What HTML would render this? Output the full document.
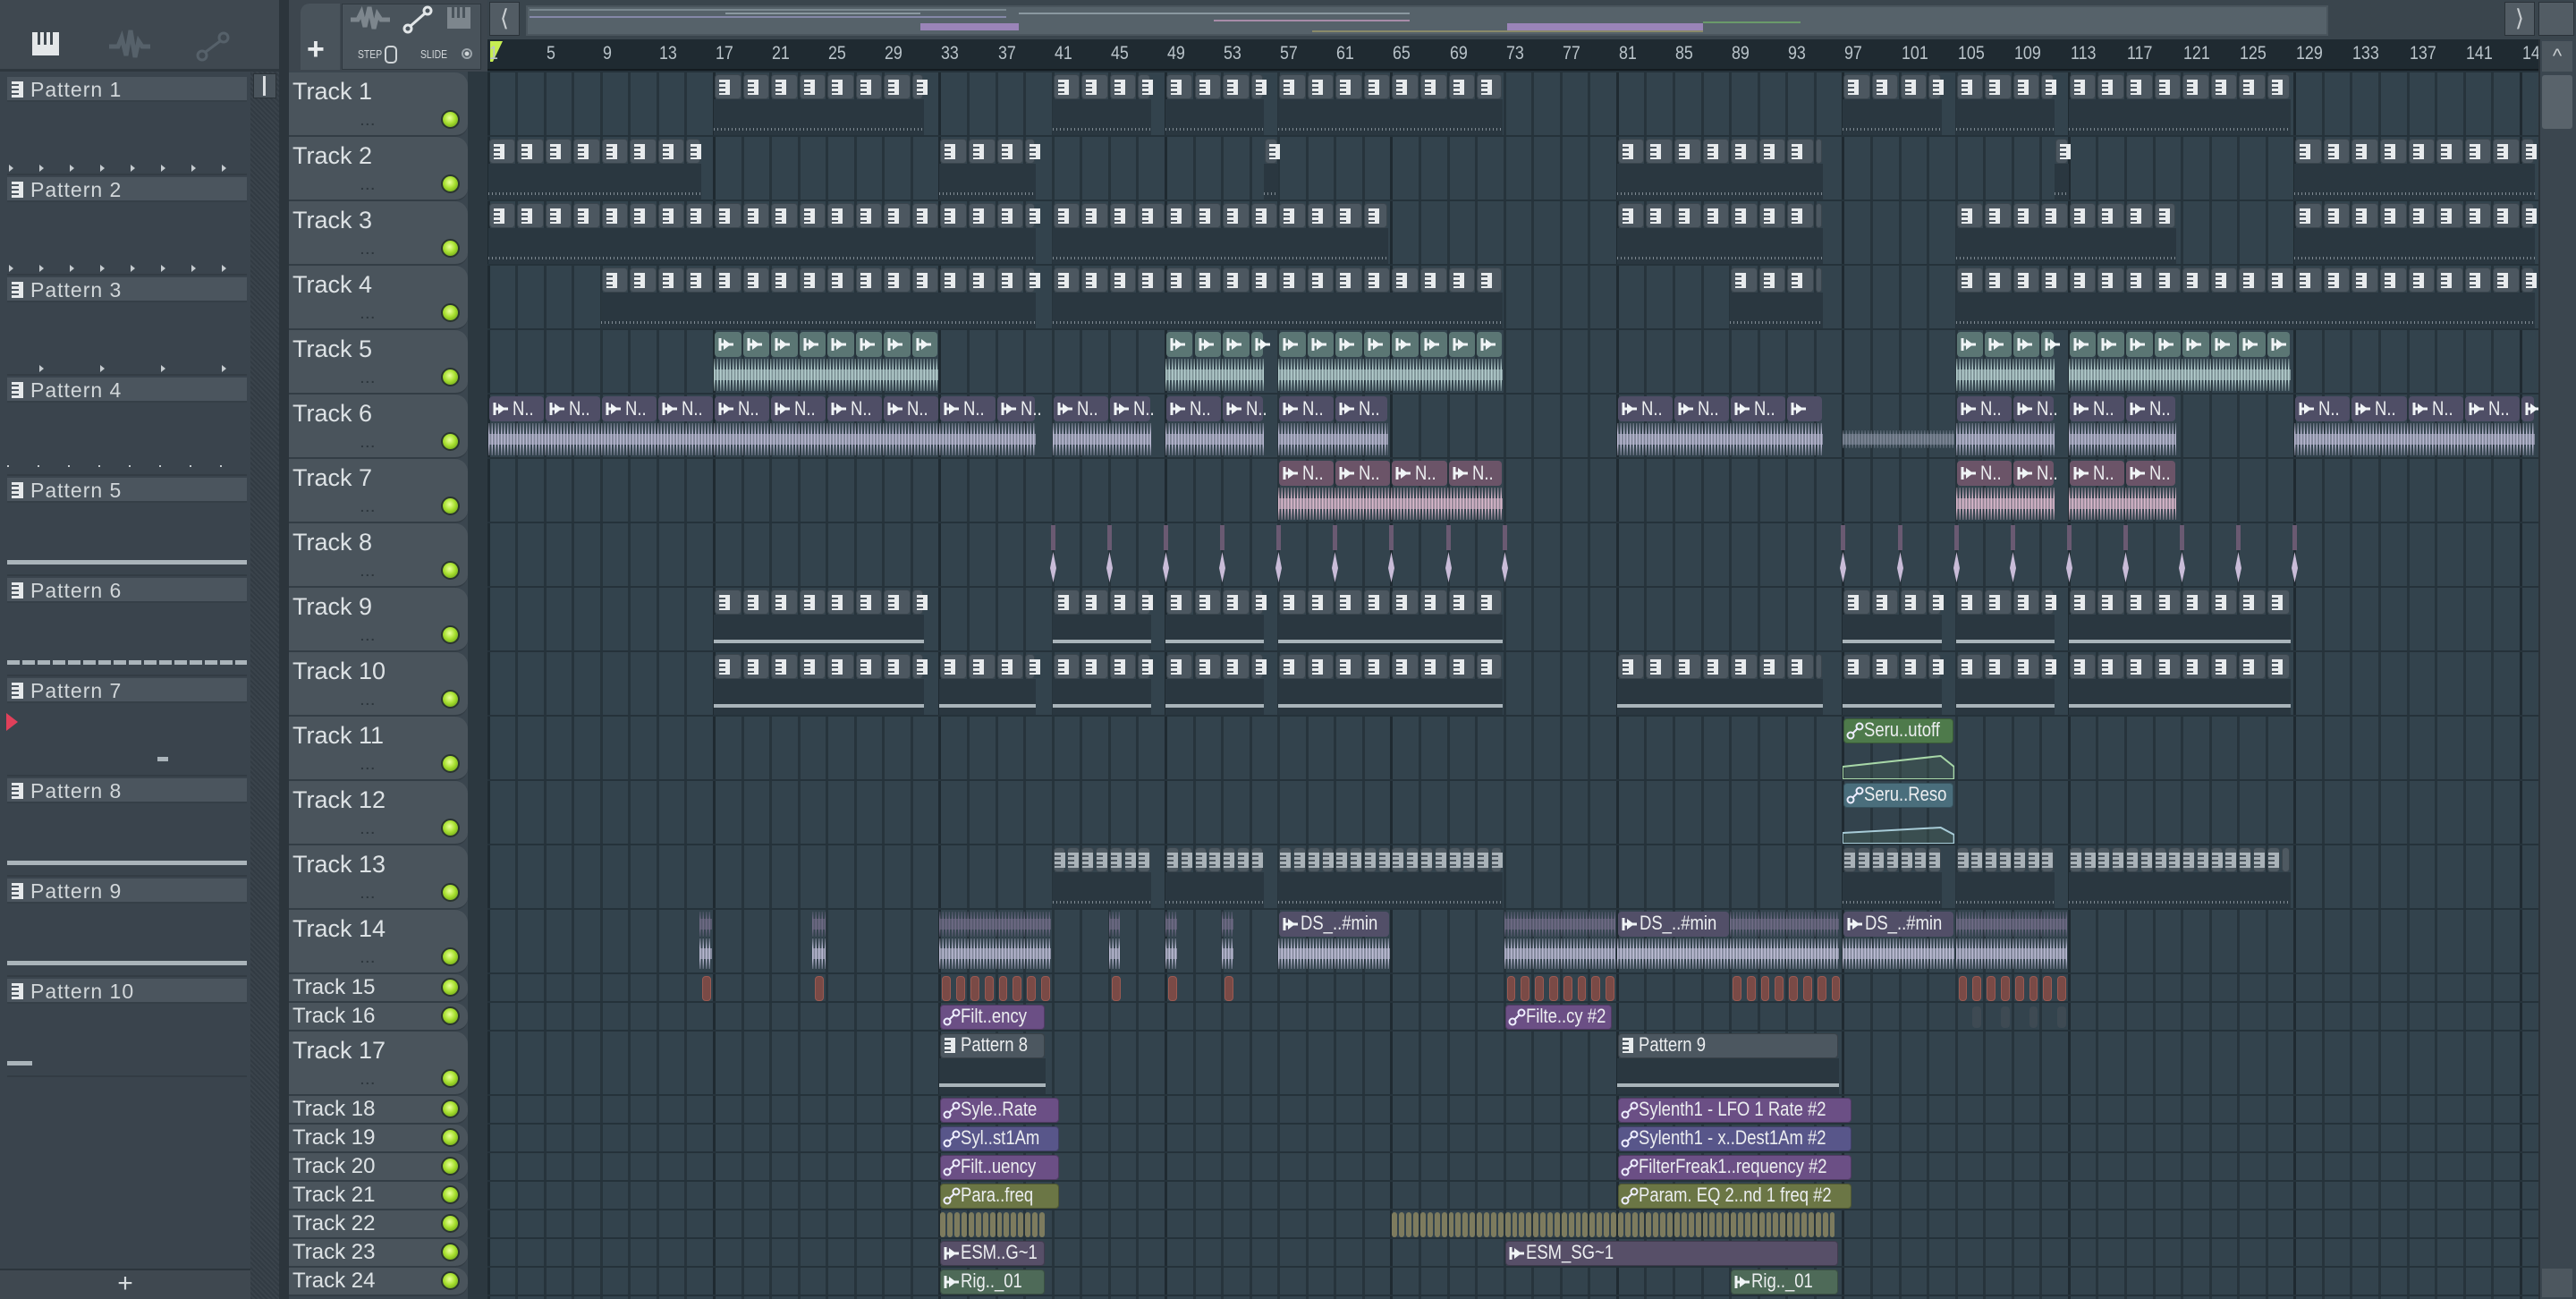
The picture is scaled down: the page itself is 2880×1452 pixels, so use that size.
<!DOCTYPE html>
<html><head><meta charset="utf-8">
<style>
*{box-sizing:border-box;margin:0;padding:0}
body{width:2880px;height:1452px;overflow:hidden;background:#3b464f;font-family:"Liberation Sans Narrow","Liberation Sans",sans-serif;color:#d6dbde;position:relative}
.a{position:absolute}
.trk{position:absolute;left:323px;width:200px;background:#4a545c;border-radius:0 14px 14px 0;border-bottom:2px solid #333d45}
.trk span{position:absolute;left:4px;top:6px;font-size:27px;color:#dde2e5}
.trk.s span{top:1px;font-size:24px}
.trk i{position:absolute;right:9px;width:21px;height:21px;border-radius:50%;background:radial-gradient(circle at 45% 40%,#e8ff9a 0,#a8e030 45%,#5a9010 100%);border:2px solid #2a3530}
.trk b{position:absolute;left:80px;bottom:8px;font-size:14px;color:#2d363d;letter-spacing:2px}
.pat{position:absolute;left:8px;width:268px;height:28px;background:#4b555e;border-bottom:2px solid #353f47}
.pat span{position:absolute;left:26px;top:1px;font-size:23px;color:#d2d7da;letter-spacing:1px}
.pi{position:absolute;width:13px;height:18px;background:#e6e9eb;left:5px;top:5px}
.pi:before{content:"";position:absolute;left:0;top:3px;width:8px;height:2px;background:#4b555e;box-shadow:0 5px 0 #4b555e,0 10px 0 #4b555e}
.cl{position:absolute;overflow:hidden}
.lb{position:absolute;font-size:22px;color:#eceef0;white-space:nowrap;transform:scaleX(.84);transform-origin:0 0}
.rn{position:absolute;top:48px;font-size:21px;color:#b9c3c9}
</style></head><body>
<div class="a" style="left:0;top:0;width:316px;height:1452px;background:#3a444d"></div>
<div class="a" style="left:0;top:0;width:316px;height:80px;background:#3f4850;border-bottom:3px solid #2e373e"></div>
<div class="a" style="left:36px;top:36px;width:30px;height:26px;background:#e4e7e9"></div>
<div class="a" style="left:42px;top:36px;width:3px;height:14px;background:#3f4850;box-shadow:7px 0 0 #3f4850,14px 0 0 #3f4850"></div>
<svg class="a" style="left:120px;top:32px" width="50" height="40"><path d="M2 20h10l4-10 5 20 5-28 5 30 4-18 4 6h9" stroke="#56616a" stroke-width="5" fill="none"/></svg>
<svg class="a" style="left:218px;top:34px" width="40" height="36"><circle cx="8" cy="28" r="5" stroke="#56616a" stroke-width="3" fill="none"/><circle cx="32" cy="8" r="5" stroke="#56616a" stroke-width="3" fill="none"/><path d="M12 24L28 12" stroke="#56616a" stroke-width="3"/></svg>
<div class="a" style="left:280px;top:80px;width:32px;height:1372px;background:repeating-linear-gradient(45deg,#323b43 0 2px,#3a434b 2px 4px)"></div>
<div class="a" style="left:283px;top:82px;width:26px;height:28px;background:#4a545c;border:1px solid #2a3238"></div>
<div class="a" style="left:294px;top:85px;width:3px;height:22px;background:#d8dcdf"></div>
<div class="a" style="left:312px;top:0;width:11px;height:1452px;background:#2c353c"></div>
<div class="a" style="left:0;top:1418px;width:280px;height:34px;background:#3f4850;border-top:2px solid #2c353c;text-align:center;font-size:30px;line-height:30px;color:#d6dbde">+</div>

<div class="pat" style="top:86px"><div class="pi"></div><span>Pattern 1</span></div>
<div class="pat" style="top:198px"><div class="pi"></div><span>Pattern 2</span></div>
<div class="pat" style="top:310px"><div class="pi"></div><span>Pattern 3</span></div>
<div class="pat" style="top:422px"><div class="pi"></div><span>Pattern 4</span></div>
<div class="pat" style="top:534px"><div class="pi"></div><span>Pattern 5</span></div>
<div class="pat" style="top:646px"><div class="pi"></div><span>Pattern 6</span></div>
<div class="pat" style="top:758px"><div class="pi"></div><span>Pattern 7</span></div>
<div class="pat" style="top:870px"><div class="pi"></div><span>Pattern 8</span></div>
<div class="pat" style="top:982px"><div class="pi"></div><span>Pattern 9</span></div>
<div class="pat" style="top:1094px"><div class="pi"></div><span>Pattern 10</span></div>
<div id="pp"></div>

<div class="a" style="left:323px;top:0;width:222px;height:80px;background:#3d464e"></div>
<div class="a" style="left:336px;top:4px;width:44px;height:74px;background:#49535b;border-radius:10px 0 0 0"></div>
<div class="a" style="left:343px;top:36px;font-size:34px;color:#e8ebed;font-family:'Liberation Sans',sans-serif;font-weight:bold">+</div>
<div class="a" style="left:382px;top:4px;width:156px;height:74px;background:#49535b;border:1px solid #2f383f"></div>
<svg class="a" style="left:390px;top:6px" width="50" height="32"><path d="M2 16h8l4-8 4 16 5-22 5 24 4-16 4 6h10" stroke="#7d868d" stroke-width="5" fill="none"/></svg>
<svg class="a" style="left:450px;top:6px" width="34" height="32"><circle cx="6" cy="26" r="4" stroke="#e2e6e8" stroke-width="3" fill="none"/><circle cx="28" cy="6" r="4" stroke="#e2e6e8" stroke-width="3" fill="none"/><path d="M9 23L25 9" stroke="#e2e6e8" stroke-width="3"/></svg>
<div class="a" style="left:500px;top:8px;width:26px;height:24px;background:#7d868d"></div>
<div class="a" style="left:505px;top:8px;width:3px;height:12px;background:#49535b;box-shadow:6px 0 0 #49535b,12px 0 0 #49535b"></div>
<div class="a" style="left:400px;top:53px;font-size:13px;color:#d0d5d8;transform:scaleX(.8);transform-origin:0 0">STEP</div>
<div class="a" style="left:430px;top:51px;width:14px;height:20px;border:2px solid #d0d5d8;border-radius:5px"></div>
<div class="a" style="left:470px;top:53px;font-size:13px;color:#d0d5d8;transform:scaleX(.8);transform-origin:0 0">SLIDE</div>
<div class="a" style="left:516px;top:54px;width:12px;height:12px;border:2px solid #9aa3a9;border-radius:50%;background:radial-gradient(#d0d5d8 0 2px,transparent 3px)"></div>
<div class="a" style="left:545px;top:0;width:2335px;height:44px;background:#3a454d"></div>
<div class="a" style="left:547px;top:2px;width:34px;height:38px;background:#525c64;border:1px solid #2a3238;color:#c8cdd0;font-size:26px;text-align:center;line-height:34px">&#10216;</div>
<div class="a" style="left:588px;top:6px;width:2015px;height:34px;background:#56626a;border:2px solid #4a555d"></div>
<div id="ov"></div>
<div class="a" style="left:2800px;top:2px;width:34px;height:38px;background:#525c64;border:1px solid #2a3238;color:#c8cdd0;font-size:26px;text-align:center;line-height:34px">&#10217;</div>
<div class="a" style="left:2838px;top:2px;width:40px;height:38px;background:#525c64;border:1px solid #2a3238"></div>
<div class="a" style="left:545px;top:44px;width:2293px;height:35px;background:#1f2a31;border-bottom:2px solid #141b20"></div>
<svg class="a" style="left:547px;top:45px" width="16" height="26"><path d="M1 1h14L4 24H1z" fill="#c6ee52"/></svg>
<div id="rul"></div>
<div class="a" style="left:523px;top:80px;width:22px;height:1372px;background:#2c3840"></div>
<div class="a" style="left:545px;top:80px;width:2293px;height:1372px;background:#33434d"></div>
<div id="g"></div>
<div class="a" style="left:2838px;top:44px;width:42px;height:1408px;background:#3b464f;border-left:2px solid #2a3238"></div>
<div class="a" style="left:2842px;top:46px;width:34px;height:34px;background:#4d575f;color:#c8cdd0;font-size:22px;text-align:center;line-height:34px">^</div>
<div class="a" style="left:2842px;top:84px;width:34px;height:60px;background:#59636b;border-radius:3px"></div>
<div class="a" style="left:2842px;top:1418px;width:34px;height:32px;background:#4d575f"></div>
<script>
const GX=545.5,BW=15.78;
const X=b=>GX+(b-1)*BW;
let h='';
for(let b=1;b<=145;b+=4){h+=`<div class="rn" style="left:${X(b)+(b==1?1:2)}px;transform:scaleX(.85);transform-origin:0 0">${b}</div>`;}
document.getElementById('rul').innerHTML=h;h='';
// overview hints
let o='';const OX=592,OW=1995/146;const ob=(b,e,y,c,hh)=>o+=`<div class="a" style="left:${OX+(b-1)*OW}px;top:${y}px;width:${(e-b)*OW}px;height:${hh||2}px;background:${c}"></div>`;
ob(1,40,10,'#7a8890');ob(17,33,14,'#8a98a0');ob(41,73,14,'#8a98a0');ob(1,40,18,'#8588a8');ob(57,73,22,'#a88ca8');ob(33,41,26,'#9a84b8',8);ob(81,97,26,'#9a84b8',8);ob(65,97,34,'#8a8a6a');ob(97,105,24,'#6a9a6a');
document.getElementById('ov').innerHTML=o;
for(let b=1;b<=147;b+=2){h+=`<div class="a" style="left:${X(b)-1}px;top:80px;width:3px;height:1372px;background:${(b-1)%16==0?'#1f2a31':'#27343c'}"></div>`;}
const H=[72,72,72,72,72,72,72,72,72,72,72,72,72,72,32,32,72,32,32,32,32,32,32,32];
const TOP=[];let y=81;for(const v of H){TOP.push(y);y+=v;}
TOP.push(y);
for(let i=0;i<=H.length;i++)h+=`<div class="a" style="left:545px;top:${TOP[i]-2}px;width:2293px;height:2px;background:#25323a"></div>`;
for(let i=0;i<H.length;i++){const s=H[i]<40;
h+=`<div class="trk${s?' s':''}" style="top:${TOP[i]}px;height:${H[i]}px"><span>Track ${i+1}</span>${s?'':'<b>...</b>'}<i style="top:${s?4:H[i]-30}px"></i></div>`;}
function cell(x,w,top,hh,bg,bd){return `<div class="cl" style="left:${x}px;top:${top}px;width:${w}px;height:${hh}px;background:${bg};border-radius:4px;${bd||''}"></div>`;}
const PI=(x,t,c)=>`<div class="a" style="left:${x}px;top:${t}px;width:12px;height:17px;background:${c||'#e8ebed'}"></div><div class="a" style="left:${x}px;top:${t+3}px;width:7px;height:2px;background:#4b555e;box-shadow:0 5px 0 #4b555e,0 10px 0 #4b555e"></div>`;
const ARR=(x,t,c)=>`<svg class="a" style="left:${x}px;top:${t}px" width="20" height="20"><path d="M2 3v14M2 10h15" stroke="${c||'#f0f4f6'}" stroke-width="3" fill="none"/><path d="M6 4l8 6-8 6z" fill="${c||'#f0f4f6'}"/></svg>`;
function wave(x,w,t,hh,c){return `<div class="a" style="left:${x}px;top:${t}px;width:${w}px;height:${hh}px;background:repeating-linear-gradient(90deg,${c} 0 1.5px,transparent 1.5px 3.5px);-webkit-mask:linear-gradient(180deg,rgba(0,0,0,.3),#000 30%,#000 70%,rgba(0,0,0,.3))"></div><div class="a" style="left:${x}px;top:${t+hh/2-6}px;width:${w}px;height:12px;background:${c};opacity:.6"></div>`;}
function pat(i,s,e,step,opt){const t=TOP[i];const x0=X(s),x1=X(e);step=step||2;
h+=`<div class="a" style="left:${x0}px;top:${t+30}px;width:${x1-x0}px;height:${H[i]-32}px;background:#2a3740"></div>`;
if(opt=='line')h+=`<div class="a" style="left:${x0}px;top:${t+H[i]-14}px;width:${x1-x0}px;height:4px;background:#a9b4ba"></div>`;
else h+=`<div class="a" style="left:${x0}px;top:${t+H[i]-10}px;width:${x1-x0}px;height:3px;background:repeating-linear-gradient(90deg,#7d8890 0 1px,transparent 1px 4px)"></div>`;
for(let b=s;b<e-0.2;b+=step){const w=Math.min(step*BW,x1-X(b))-2;
h+=cell(X(b)+1,w,t+2,28,opt=='dim'?'#4e5961':'#4c5760','border:1px solid #3a454d');
if(w>10)h+=PI(X(b)+(step==1?2:6),t+8,opt=='dim'?'#a9b2b8':null);}}
function aud(i,s,e,hc,wc,lab,step){const t=TOP[i];const x0=X(s),x1=X(e);step=step||4;
h+=wave(x0,x1-x0,t+32,H[i]-36,wc);
for(let b=s;b<e-0.2;b+=step){const w=Math.min(step*BW,x1-X(b))-2;
h+=cell(X(b)+1,w,t+2,28,hc);h+=ARR(X(b)+5,t+6);if(lab&&w>40)h+=`<div class="lb" style="left:${X(b)+27}px;top:${t+3}px">${lab}</div>`;}}
function named(i,s,e,c,lab,ic){const t=TOP[i];const x0=X(s),x1=X(e);
h+=cell(x0+1,x1-x0-2,t+2,28,c,'border:1px solid rgba(0,0,0,.25)');
if(ic=='p')h+=PI(x0+6,t+7);else if(ic=='a')h+=ARR(x0+5,t+6);else h+=`<svg class="a" style="left:${x0+4}px;top:${t+6}px" width="20" height="20"><circle cx="5" cy="15" r="3.5" stroke="#eef" stroke-width="2" fill="none"/><circle cx="15" cy="5" r="3.5" stroke="#eef" stroke-width="2" fill="none"/><path d="M7.5 12.5l5-5" stroke="#eef" stroke-width="2"/></svg>`;
h+=`<div class="lb" style="left:${x0+24}px;top:${t+2}px">${lab}</div>`;}
const P1=[[17,31.9],[41,48],[49,56],[57,72.9],[97,104],[105,112],[113,128.7]];
P1.forEach(r=>pat(0,r[0],r[1]));
[[1,16.1],[33,39.8],[56,57],[81,95.6],[112,113],[129,146]].forEach(r=>pat(1,r[0],r[1]));
[[1,39.8],[41,64.8],[81,95.6],[105,120.6],[129,146]].forEach(r=>pat(2,r[0],r[1]));
[[9,39.8],[41,72.9],[89,95.6],[105,146]].forEach(r=>pat(3,r[0],r[1]));
[[17,32.9],[49,56],[57,72.9],[105,112],[113,128.7]].forEach(r=>aud(4,r[0],r[1],'#5b7674','#b5cfcf',null,2));
[[1,39.8],[41,48],[49,56],[57,64.8],[81,95.6],[105,112],[113,120.6],[129,146]].forEach(r=>aud(5,r[0],r[1],'#4f4e66','#b9b9d2','N..',4));
h+=wave(X(97),X(104.9)-X(97),TOP[5]+40,20,'#7f8898');
[[57,72.9],[105,112],[113,120.6]].forEach(r=>aud(6,r[0],r[1],'#6b5468','#dbb9cd','N..',4));
[41,45,49,53,57,61,65,69,73,97,101,105,109,113,117,121,125,129].forEach(b=>{const t=TOP[7];h+=`<div class="a" style="left:${X(b)-2}px;top:${t+2}px;width:5px;height:28px;background:#6a5a72"></div><svg class="a" style="left:${X(b)-4}px;top:${t+30}px" width="9" height="38"><path d="M4.5 2L8 20 4.5 36 1 20z" fill="#c9bcd8"/></svg>`;});
P1.forEach(r=>pat(8,r[0],r[1],2,'line'));
P1.concat([[33,39.8],[81,95.6]]).forEach(r=>pat(9,r[0],r[1],2,'line'));
[[10,'#4e7a4b','Seru..utoff','#a8d8a8'],[11,'#4a6e7c','Seru..Reso','#a8ccd8']].forEach(a=>{const i=a[0],t=TOP[i];named(i,97,104.9,a[1],a[2]);
h+=`<svg class="a" style="left:${X(97)}px;top:${t+30}px" width="${X(104.9)-X(97)}" height="40"><path d="M0 ${i==10?26:28}L${(X(104.9)-X(97))*0.88} ${i==10?14:22}L${X(104.9)-X(97)} ${i==10?26:30}V40H0z" fill="rgba(80,110,90,.25)" stroke="${a[3]}" stroke-width="2"/></svg>`;});
[[41,48],[49,56],[57,72.9],[97,104],[105,112],[113,128.7]].forEach(r=>pat(12,r[0],r[1],1,'dim'));
const t14=TOP[13];
[[16,16.9],[24,24.9],[45,45.8],[49,49.8],[53,53.8],[33,40.9],[73,80.9],[105,112.9]].forEach(r=>{h+=wave(X(r[0]),X(r[1])-X(r[0]),t14+2,28,'#6f6b86')+wave(X(r[0]),X(r[1])-X(r[0]),t14+32,34,'#b9b9d2');});
h+=wave(X(89),X(96.7)-X(89),t14+2,28,'#6f6b86');
[[57,64.9],[81,96.7],[97,104.9]].forEach(r=>{h+=wave(X(r[0]),X(r[1])-X(r[0]),t14+32,34,'#c0c0d8');const e=r[0]==81?89:r[1];h+=cell(X(r[0])+1,X(e)-X(r[0])-2,t14+2,28,'#524f68');h+=ARR(X(r[0])+5,t14+6);h+=`<div class="lb" style="left:${X(r[0])+25}px;top:${t14+2}px">DS_..#min</div>`;});
const t15=TOP[14];
[16,24,33,34,35,36,37,38,39,40,45,49,53,73,74,75,76,77,78,79,80,89,90,91,92,93,94,95,96,105,106,107,108,109,110,111,112].forEach(b=>{h+=cell(X(b)+3,BW-6,t15+2,28,'#7a4a46','border:1px solid #9a5a52');});
named(15,33,40.5,'#6b4f85','Filt..ency');
named(15,73,80.7,'#6b4f85','Filte..cy #2');
[106,108,110,112].forEach(b=>h+=cell(X(b)+3,BW-6,TOP[15]+4,24,'#3e4a53'));
[[33,40.5,'Pattern 8'],[81,96.7,'Pattern 9']].forEach(r=>{const t=TOP[16];h+=`<div class="a" style="left:${X(r[0])}px;top:${t+30}px;width:${X(r[1])-X(r[0])}px;height:40px;background:#2a3740"></div><div class="a" style="left:${X(r[0])}px;top:${t+58}px;width:${X(r[1])-X(r[0])}px;height:4px;background:#a9b4ba"></div>`;named(16,r[0],r[1],'#4c5760',r[2],'p');});
named(17,33,41.5,'#6b4f85','Syle..Rate');named(17,81,97.7,'#6b4f85','Sylenth1 - LFO 1 Rate #2');
named(18,33,41.5,'#58568a','Syl..st1Am');named(18,81,97.7,'#58568a','Sylenth1 - x..Dest1Am #2');
named(19,33,41.5,'#6b4f85','Filt..uency');named(19,81,97.7,'#6b4f85','FilterFreak1..requency #2');
named(20,33,41.5,'#6b7645','Para..freq');named(20,81,97.7,'#6b7645','Param. EQ 2..nd 1 freq #2');
[[33,40.5],[65,96.7]].forEach(r=>{for(let b=r[0];b<r[1]-0.2;b+=0.5)h+=cell(X(b)+1,BW/2-2,TOP[21]+2,28,'#7d7b5e');});
named(22,33,40.5,'#574f68','ESM..G~1','a');named(22,73,96.7,'#574f68','ESM_SG~1','a');
named(23,33,40.5,'#4e6a58','Rig.._01','a');named(23,89,96.7,'#4e6a58','Rig.._01','a');
document.getElementById('g').innerHTML=h;
let p='';
[0,1,2].forEach(k=>{const y=86+112*k+98;for(let j=0;j<8;j++){if(k==2&&j%2==0)continue;p+=`<div class="a" style="left:${10+j*34}px;top:${y}px;width:0;height:0;border-left:5px solid #c5cbcf;border-top:4px solid transparent;border-bottom:4px solid transparent"></div>`;}});
p+=`<div class="a" style="left:8px;top:${86+112*3+98}px;width:268px;height:2px;background:repeating-linear-gradient(90deg,#c5cbcf 0 2px,transparent 2px 34px)"></div>`;
[4,7,8].forEach(k=>p+=`<div class="a" style="left:8px;top:${86+112*k+92}px;width:268px;height:5px;background:#aab4ba"></div>`);
p+=`<div class="a" style="left:8px;top:${86+112*5+92}px;width:268px;height:5px;background:repeating-linear-gradient(90deg,#aab4ba 0 14px,transparent 14px 17px)"></div>`;
p+=`<div class="a" style="left:176px;top:${86+112*6+88}px;width:12px;height:5px;background:#aab4ba"></div>`;
p+=`<svg class="a" style="left:6px;top:796px" width="16" height="22"><path d="M1 1L14 11 1 21z" fill="#e0405a"/></svg>`;
p+=`<div class="a" style="left:8px;top:${86+112*9+92}px;width:28px;height:5px;background:#aab4ba"></div>`;
for(let k=0;k<10;k++)p+=`<div class="a" style="left:8px;top:${86+112*k+30}px;width:268px;height:80px;border-bottom:2px solid #333c44"></div>`;
document.getElementById('pp').innerHTML=p;
</script>
</body></html>
